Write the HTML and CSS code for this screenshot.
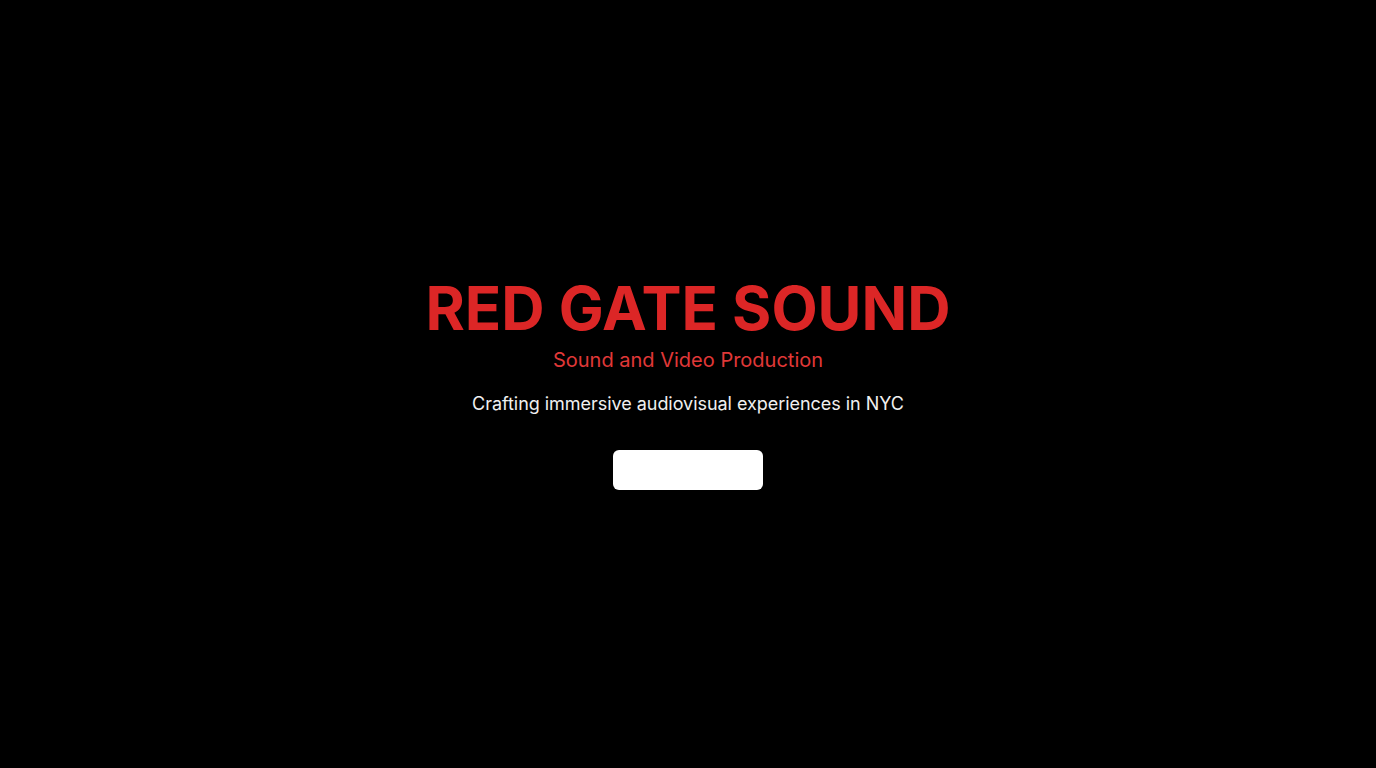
FILE: index.html
```html
<!DOCTYPE html>
<html lang="en">
<head>
<meta charset="utf-8">
<title>Red Gate Sound</title>
<link rel="stylesheet" href="styles.css">
</head>
<body>
<main class="hero">
  <h1 class="title">RED GATE SOUND</h1>
  <p class="subtitle">Sound and Video Production</p>
  <p class="tagline">Crafting immersive audiovisual experiences in NYC</p>
  <button class="cta" type="button"></button>
</main>
</body>
</html>
```
FILE: styles.css
```css
* { box-sizing: border-box; }
html, body {
  margin: 0;
  padding: 0;
  background: #000;
  height: 100%;
}
body {
  font-family: Inter, "Noto Sans", sans-serif;
}
.hero {
  min-height: 100vh;
  display: flex;
  flex-direction: column;
  align-items: center;
  justify-content: center;
  text-align: center;
}
.title {
  margin: 0 0 8px;
  font-size: 60px;
  line-height: 60px;
  font-weight: 700;
  color: #dc2626;
  letter-spacing: 0;
}
.subtitle {
  margin: 0 0 16px;
  font-size: 20px;
  line-height: 28px;
  color: #e03838;
}
.tagline {
  margin: 0 0 32px;
  font-size: 18px;
  line-height: 28px;
  letter-spacing: -0.04px;
  color: #f0f0f0;
}
.cta {
  width: 150px;
  height: 40px;
  border: none;
  border-radius: 6px;
  background: #fff;
  padding: 0;
}
```
